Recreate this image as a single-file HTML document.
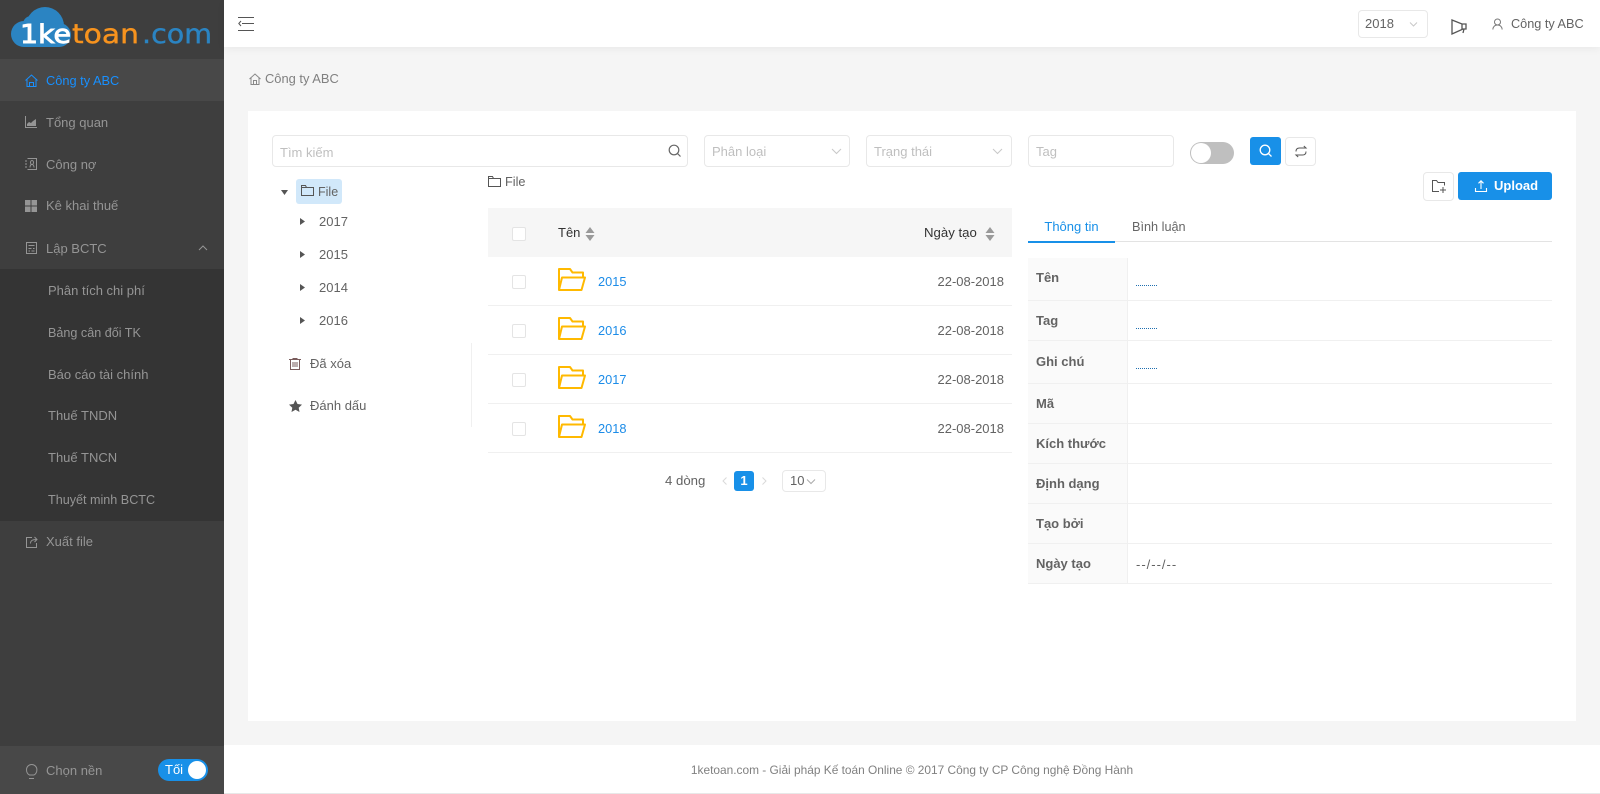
<!DOCTYPE html>
<html lang="vi"><head><meta charset="utf-8"><title>1ketoan</title>
<style>
html,body{margin:0;padding:0;width:1600px;height:794px;overflow:hidden;background:#f5f5f5}
body{font-family:"Liberation Sans","Noto Sans CJK JP",sans-serif;font-size:13px;color:#636363;position:relative}
.a,.t{position:absolute}
.t{line-height:20px;white-space:nowrap}
.s{color:#959595;font-size:13px}
.box{position:absolute;box-sizing:border-box;background:#fff;border:1px solid #e8e8e8;border-radius:4px}
.ph{color:#bfbfbf}
.cb{position:absolute;box-sizing:border-box;width:14px;height:14px;border:1px solid #e4e4e4;border-radius:2px;background:#fff}
.ln{position:absolute;height:1px;background:#f0f0f0}
.b{font-weight:bold;color:#636363}
.lnk{color:#1c8ce8}
svg{position:absolute;overflow:visible}
.dots{position:absolute;width:21px;height:0;border-top:1px dotted #1f6fb0}
</style></head><body>

<div class="a" style="left:0;top:0;width:224px;height:794px;background:#3e3e3e"></div>
<div class="a" style="left:0;top:59px;width:224px;height:42px;background:#484848"></div>
<div class="a" style="left:0;top:269px;width:224px;height:252px;background:#343434"></div>
<div class="a" style="left:0;top:746px;width:224px;height:48px;background:#484848"></div>

<svg style="left:0;top:0" width="224" height="58">
<g fill="#2b84c2"><circle cx="24" cy="34" r="13"/><circle cx="31" cy="24" r="8"/><circle cx="45" cy="26" r="19"/><circle cx="59" cy="35" r="12"/><rect x="24" y="30" width="35" height="17"/></g>
<text x="20" y="43" font-family="DejaVu Sans" font-size="26" fill="#fff" stroke="#fff" stroke-width=".9" textLength="51" lengthAdjust="spacingAndGlyphs">1ke</text>
<text x="72" y="43" font-family="DejaVu Sans" font-size="27" fill="#f7931e" stroke="#f7931e" stroke-width=".4" textLength="67" lengthAdjust="spacingAndGlyphs">toan</text>
<text x="142" y="43" font-family="DejaVu Sans" font-size="27" fill="#2b84c2" stroke="#2b84c2" stroke-width=".4" textLength="70" lengthAdjust="spacingAndGlyphs">.com</text>
</svg>

<svg style="left:25px;top:74px" width="13" height="13" fill="none" stroke="#1890ff" stroke-width="1"><path d="M.5 6.500 6.500 1l6 5.500M2 5.500V12.500h9V5.500M4.500 12.500V8.500h4v4"/></svg>
<div class="t" style="left:46px;top:71px;color:#1890ff;font-size:12.800px">Công ty ABC</div>
<svg style="left:25px;top:116px" width="12" height="12" fill="#959595"><path d="M0 0h1v11h11v1H0z"/><path d="M2 10V8l2-2 2 1 2-2 3-2v7z"/></svg>
<div class="t s" style="left:46px;top:113px">Tổng quan</div>
<svg style="left:25px;top:158px" width="12" height="12" fill="none" stroke="#959595"><path d="M2.500.5h9v11h-9M0 3h2M0 6h2M0 9h2M5 9.500c0-2 1-3 2-3s2 1 2 3M7 6.500a1.500 2 0 1 0 0-4 1.500 2 0 0 0 0 4z"/></svg>
<div class="t s" style="left:46px;top:155px">Công nợ</div>
<svg style="left:25px;top:200px" width="12" height="12" fill="#959595"><rect width="5.500" height="5.500"/><rect x="6.500" width="5.500" height="5.500"/><rect y="6.500" width="5.500" height="5.500"/><rect x="6.500" y="6.500" width="5.500" height="5.500"/></svg>
<div class="t s" style="left:46px;top:196px">Kê khai thuế</div>
<svg style="left:26px;top:242px" width="11" height="12" fill="none" stroke="#959595"><path d="M.5.500h10v11H.5zM2.500 3.500h6M2.500 6.500h3M7 6.500h1.500M2.500 9h1.500M5.500 9h3"/></svg>
<div class="t s" style="left:46px;top:239px">Lập BCTC</div>
<svg style="left:198px;top:245px" width="10" height="6" fill="none" stroke="#959595"><path d="M1 5 5 1l4 4"/></svg>
<div class="t s" style="left:48px;top:281px">Phân tích chi phí</div>
<div class="t s" style="left:48px;top:323px;font-size:12.600px">Bảng cân đối TK</div>
<div class="t s" style="left:48px;top:365px">Báo cáo tài chính</div>
<div class="t s" style="left:48px;top:406px">Thuế TNDN</div>
<div class="t s" style="left:48px;top:448px">Thuế TNCN</div>
<div class="t s" style="left:48px;top:490px;font-size:12.600px">Thuyết minh BCTC</div>
<svg style="left:26px;top:536px" width="12" height="12" fill="none" stroke="#959595"><path d="M6 1.500H.5v10h10V7M4.500 7.500c0-3 2-4 6-4M8.500 1l2.500 2.500L8.500 6"/></svg>
<div class="t s" style="left:46px;top:532px">Xuất file</div>
<svg style="left:26px;top:764px" width="11" height="15" fill="none" stroke="#959595"><path d="M3.500 11C1.500 10 .5 8 .5 5.700a5.200 5.200 0 0 1 10.400 0c0 2.300-1 4.300-3 5.300zM3 14.500h5"/></svg>
<div class="t s" style="left:46px;top:761px">Chọn nền</div>
<div class="a" style="left:158px;top:759px;width:50px;height:22px;border-radius:11px;background:#1890e8"></div>
<div class="a" style="left:188px;top:761px;width:18px;height:18px;border-radius:50%;background:#fff"></div>
<div class="t" style="left:165px;top:760px;color:#fff;font-size:13px">Tối</div>

<div class="a" style="left:224px;top:0;width:1376px;height:47px;background:#fff;box-shadow:0 2px 8px rgba(0,0,0,.05)"></div>
<svg style="left:238px;top:17px" width="17" height="14" fill="none" stroke="#555"><path d="M0 .5h16M4 6.500h12M0 13.500h16M3 4 .8 6.500 3 9"/></svg>
<div class="box" style="left:1358px;top:10px;width:70px;height:28px"></div>
<div class="t" style="left:1365px;top:14px">2018</div>
<svg style="left:1409px;top:22px" width="9" height="6" fill="none" stroke="#c8c8c8"><path d="M1 .5l3.500 3.500 3.500-3.500"/></svg>
<svg style="left:1451px;top:19px" width="17" height="16" fill="none" stroke="#555" stroke-width="1.300"><path d="M1 1l10 4h4v5h-3L1 15zM11 5v5M13 10l-1 4"/></svg>
<svg style="left:1492px;top:18px" width="11" height="12" fill="none" stroke="#777"><circle cx="5.500" cy="4" r="3"/><path d="M.8 11.500c.4-3 2-4.500 4.700-4.500s4.300 1.500 4.700 4.500"/></svg>
<div class="t" style="left:1511px;top:14px;font-size:12.700px">Công ty ABC</div>

<svg style="left:249px;top:73px" width="12" height="12" fill="none" stroke="#888"><path d="M.5 6 6 1l5.500 5M2 5v6.500h8V5M4.500 11.500v-4h3v4"/></svg>
<div class="t" style="left:265px;top:69px;color:#808080;font-size:12.900px">Công ty ABC</div>

<div class="a" style="left:248px;top:111px;width:1328px;height:610px;background:#fff"></div>
<div class="a" style="left:224px;top:745px;width:1376px;height:48px;background:#fff"></div>
<div class="a" style="left:224px;top:793px;width:1376px;height:1px;background:#e8e8e8"></div>
<div class="t" style="left:224px;width:1376px;text-align:center;top:760px;font-size:11.900px;color:#808080">1ketoan.com - Giải pháp Kế toán Online © 2017 Công ty CP Công nghệ Đồng Hành</div>

<div class="box" style="left:272px;top:135px;width:416px;height:32px"></div>
<div class="t ph" style="left:280px;top:143px">Tìm kiếm</div>
<svg style="left:668px;top:144px" width="14" height="14" fill="none" stroke="#666" stroke-width="1.200"><circle cx="6" cy="6" r="4.800"/><path d="M9.500 9.500l3 3"/></svg>
<div class="box" style="left:704px;top:135px;width:146px;height:32px"></div>
<div class="t ph" style="left:712px;top:142px">Phân loại</div>
<svg style="left:831px;top:148px" width="11" height="7" fill="none" stroke="#c8c8c8"><path d="M1 1l4.500 4.500L10 1"/></svg>
<div class="box" style="left:866px;top:135px;width:146px;height:32px"></div>
<div class="t ph" style="left:874px;top:142px">Trạng thái</div>
<svg style="left:992px;top:148px" width="11" height="7" fill="none" stroke="#c8c8c8"><path d="M1 1l4.500 4.500L10 1"/></svg>
<div class="box" style="left:1028px;top:135px;width:146px;height:32px"></div>
<div class="t ph" style="left:1036px;top:142px">Tag</div>
<div class="a" style="left:1190px;top:142px;width:44px;height:22px;border-radius:11px;background:#bfbfbf"></div>
<div class="a" style="left:1191px;top:143px;width:20px;height:20px;border-radius:50%;background:#fff"></div>
<div class="a" style="left:1250px;top:137px;width:31px;height:28px;border-radius:3px;background:#1890e8"></div>
<svg style="left:1259px;top:144px" width="14" height="14" fill="none" stroke="#fff" stroke-width="1.300"><circle cx="6" cy="6" r="4.800"/><path d="M9.500 9.500l3 3"/></svg>
<div class="box" style="left:1285px;top:137px;width:31px;height:29px"></div>
<svg style="left:1295px;top:145px" width="12" height="13" fill="none" stroke="#555"><path d="M1 6.500C1 4 2.500 3 4.500 3H11L8.800 1M11 6.500C11 9 9.500 10 7.500 10H1l2.200 2"/></svg>

<div class="box" style="left:1423px;top:172px;width:31px;height:29px"></div>
<svg style="left:1432px;top:180px" width="14" height="13" fill="none" stroke="#555"><path d="M7 11.500H.5V.5h4l1.500 2h6.500v3M11 7v6M8 10h6"/></svg>
<div class="a" style="left:1458px;top:172px;width:94px;height:28px;border-radius:3px;background:#1890e8"></div>
<svg style="left:1475px;top:180px" width="12" height="12" fill="none" stroke="#fff" stroke-width="1.100"><path d="M.5 8v3.500h11V8M6 9V.8M3.500 3.300 6 .8l2.500 2.500"/></svg>
<div class="t" style="left:1494px;top:176px;color:#fff;font-weight:bold;font-size:13px">Upload</div>

<svg style="left:281px;top:190px" width="7" height="5" fill="#555"><path d="M0 0h7L3.500 5z"/></svg>
<div class="a" style="left:296px;top:179px;width:46px;height:25px;border-radius:3px;background:#d1e8fa"></div>
<svg style="left:301px;top:185px" width="13" height="11" fill="none" stroke="#555"><path d="M.5 10.500V.5h4l1 2h7v8zM.5 2.500h5"/></svg>
<div class="t" style="left:318px;top:182px;font-size:12.500px">File</div>
<svg style="left:300px;top:218px" width="5" height="7" fill="#555"><path d="M0 0l5 3.500L0 7z"/></svg>
<div class="t" style="left:319px;top:212px">2017</div>
<svg style="left:300px;top:251px" width="5" height="7" fill="#555"><path d="M0 0l5 3.500L0 7z"/></svg>
<div class="t" style="left:319px;top:245px">2015</div>
<svg style="left:300px;top:284px" width="5" height="7" fill="#555"><path d="M0 0l5 3.500L0 7z"/></svg>
<div class="t" style="left:319px;top:278px">2014</div>
<svg style="left:300px;top:317px" width="5" height="7" fill="#555"><path d="M0 0l5 3.500L0 7z"/></svg>
<div class="t" style="left:319px;top:311px">2016</div>
<svg style="left:289px;top:358px" width="12" height="12" fill="none" stroke="#7a5c5c"><path d="M0 1.500h12M1.500 1.500v10h9v-10M4 4v5M6 4v5M8 4v5M4 1.500V.5h4v1"/></svg>
<div class="t" style="left:310px;top:354px">Đã xóa</div>
<svg style="left:289px;top:400px" width="13" height="12" fill="#555"><path d="M6.500 0l2 4 4.500.6-3.300 3.100.8 4.300-4-2.200-4 2.200.8-4.300L0 4.600 4.500 4z"/></svg>
<div class="t" style="left:310px;top:396px">Đánh dấu</div>
<div class="a" style="left:471px;top:343px;width:1px;height:84px;background:#f0f0f0"></div>

<svg style="left:488px;top:176px" width="13" height="11" fill="none" stroke="#555"><path d="M.5 10.500V.5h4l1 2h7v8zM.5 2.500h5"/></svg>
<div class="t" style="left:505px;top:172px;font-size:12.700px">File</div>
<div class="a" style="left:488px;top:208px;width:524px;height:49px;background:#f6f6f6"></div>
<div class="cb" style="left:512px;top:227px"></div>
<div class="t" style="left:558px;top:223px;color:#333">Tên</div>
<svg style="left:585px;top:227px" width="10" height="15" fill="#9a9a9a"><path d="M5 0l4.500 6h-9zM5 14L.5 8h9z"/></svg>
<div class="t" style="left:924px;top:223px;color:#333;font-size:13.200px">Ngày tạo</div>
<svg style="left:985px;top:227px" width="10" height="15" fill="#9a9a9a"><path d="M5 0l4.500 6h-9zM5 14L.5 8h9z"/></svg>

<div class="ln" style="left:488px;top:305px;width:524px"></div>
<div class="ln" style="left:488px;top:354px;width:524px"></div>
<div class="ln" style="left:488px;top:403px;width:524px"></div>
<div class="ln" style="left:488px;top:452px;width:524px"></div>

<div class="cb" style="left:512px;top:275px"></div>
<div class="cb" style="left:512px;top:324px"></div>
<div class="cb" style="left:512px;top:373px"></div>
<div class="cb" style="left:512px;top:422px"></div>

<svg style="left:558px;top:268px" width="28" height="24" fill="none" stroke="#ffb900" stroke-width="2"><path d="M1 22V1h11l2.500 3.500H25v5M4 9.500h23L23.500 22H1z" stroke-linejoin="round"/></svg>
<svg style="left:558px;top:317px" width="28" height="24" fill="none" stroke="#ffb900" stroke-width="2"><path d="M1 22V1h11l2.500 3.500H25v5M4 9.500h23L23.500 22H1z" stroke-linejoin="round"/></svg>
<svg style="left:558px;top:366px" width="28" height="24" fill="none" stroke="#ffb900" stroke-width="2"><path d="M1 22V1h11l2.500 3.500H25v5M4 9.500h23L23.500 22H1z" stroke-linejoin="round"/></svg>
<svg style="left:558px;top:415px" width="28" height="24" fill="none" stroke="#ffb900" stroke-width="2"><path d="M1 22V1h11l2.500 3.500H25v5M4 9.500h23L23.500 22H1z" stroke-linejoin="round"/></svg>

<div class="t lnk" style="left:598px;top:272px;font-size:12.800px">2015</div>
<div class="t lnk" style="left:598px;top:321px;font-size:12.800px">2016</div>
<div class="t lnk" style="left:598px;top:370px;font-size:12.800px">2017</div>
<div class="t lnk" style="left:598px;top:419px;font-size:12.800px">2018</div>
<div class="t" style="right:596px;top:272px">22-08-2018</div>
<div class="t" style="right:596px;top:321px">22-08-2018</div>
<div class="t" style="right:596px;top:370px">22-08-2018</div>
<div class="t" style="right:596px;top:419px">22-08-2018</div>

<div class="t" style="left:665px;top:471px;font-size:13.200px">4 dòng</div>
<svg style="left:722px;top:477px" width="5" height="8" fill="none" stroke="#d9d9d9"><path d="M4.500 .5 1 4l3.500 3.500"/></svg>
<div class="a" style="left:734px;top:471px;width:20px;height:20px;border-radius:3px;background:#1890e8;color:#fff;text-align:center;line-height:20px;font-weight:bold">1</div>
<svg style="left:762px;top:477px" width="5" height="8" fill="none" stroke="#d9d9d9"><path d="M.5 .5 4 4 .5 7.500"/></svg>
<div class="box" style="left:782px;top:470px;width:44px;height:22px"></div>
<div class="t" style="left:790px;top:471px">10</div>
<svg style="left:806px;top:479px" width="10" height="6" fill="none" stroke="#aaa"><path d="M1 .5l4 4 4-4"/></svg>

<div class="t" style="left:1028px;top:217px;width:87px;text-align:center;color:#1890e8">Thông tin</div>
<div class="t" style="left:1132px;top:217px;color:#666;font-size:12.700px">Bình luận</div>
<div class="a" style="left:1028px;top:241px;width:524px;height:1px;background:#e3e3e3"></div>
<div class="a" style="left:1028px;top:241px;width:87px;height:2px;background:#1890e8"></div>

<div class="a" style="left:1028px;top:258px;width:99px;height:326px;background:#fafafa"></div>
<div class="a" style="left:1127px;top:258px;width:1px;height:326px;background:#f0f0f0"></div>
<div class="ln" style="left:1028px;top:300px;width:524px"></div>
<div class="ln" style="left:1028px;top:340px;width:524px"></div>
<div class="ln" style="left:1028px;top:383px;width:524px"></div>
<div class="ln" style="left:1028px;top:423px;width:524px"></div>
<div class="ln" style="left:1028px;top:463px;width:524px"></div>
<div class="ln" style="left:1028px;top:503px;width:524px"></div>
<div class="ln" style="left:1028px;top:543px;width:524px"></div>
<div class="ln" style="left:1028px;top:583px;width:524px"></div>
<div class="t b" style="left:1036px;top:268px">Tên</div>
<div class="t b" style="left:1036px;top:311px">Tag</div>
<div class="t b" style="left:1036px;top:352px">Ghi chú</div>
<div class="t b" style="left:1036px;top:394px">Mã</div>
<div class="t b" style="left:1036px;top:434px">Kích thước</div>
<div class="t b" style="left:1036px;top:474px">Định dạng</div>
<div class="t b" style="left:1036px;top:514px">Tạo bởi</div>
<div class="t b" style="left:1036px;top:554px">Ngày tạo</div>
<div class="dots" style="left:1136px;top:285px"></div>
<div class="dots" style="left:1136px;top:328px"></div>
<div class="dots" style="left:1136px;top:368px"></div>
<div class="t" style="left:1136px;top:555px;letter-spacing:1px">--/--/--</div>

</body></html>
